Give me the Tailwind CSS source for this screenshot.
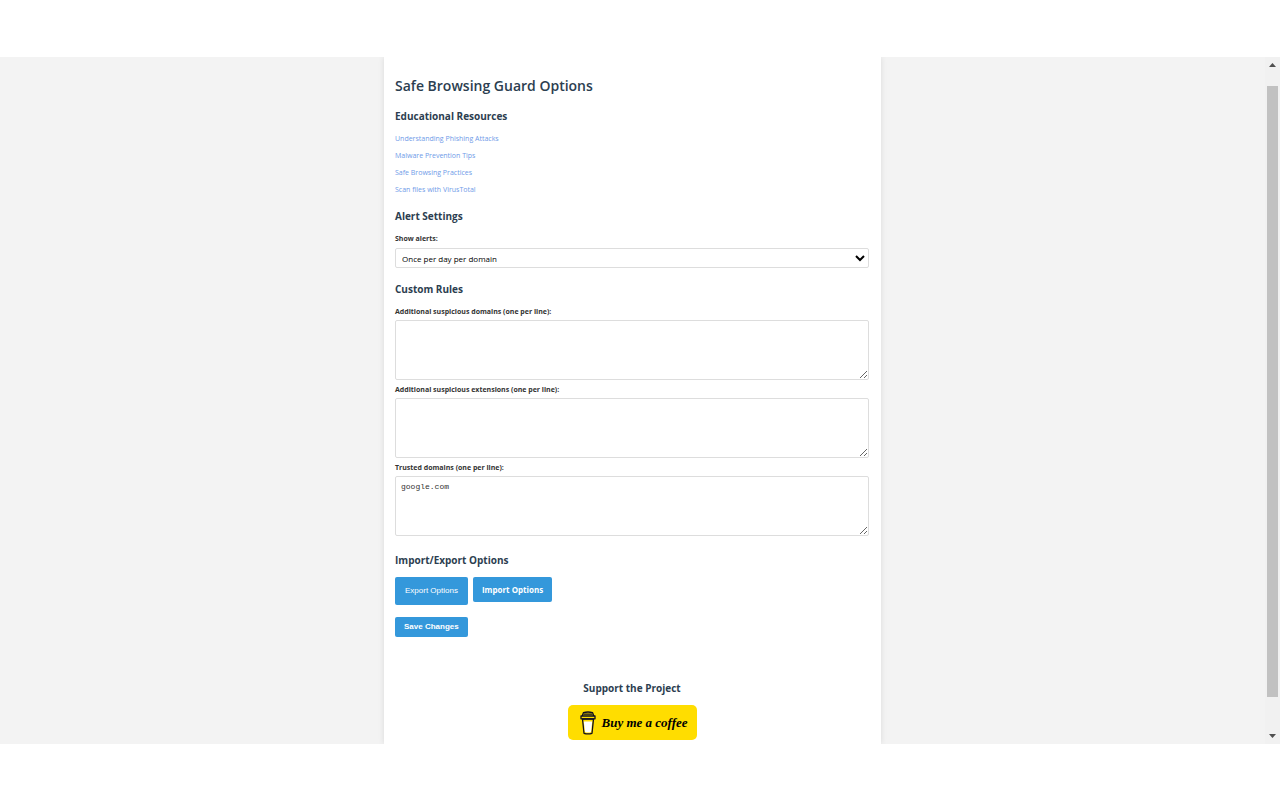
<!DOCTYPE html>
<html lang="en">
<head>
    <meta charset="UTF-8">
    <meta name="viewport" content="width=device-width, initial-scale=1.0">
    <title>Safe Browsing Guard Options</title>
    <script src="https://cdn.jsdelivr.net/npm/@tailwindcss/browser@4"></script>
</head>
<body class="bg-white h-screen pt-[57px] pb-14 flex flex-col overflow-hidden font-['Open_Sans','Noto_Sans',sans-serif] text-[#333]">
    <div class="flex flex-1 min-h-0 bg-[#f3f3f3]">
        <!-- Options page -->
        <div class="flex-1 overflow-hidden">
            <main class="max-w-[497px] min-h-full mx-auto pl-[11px] pr-3 pt-[19px] bg-white shadow-[0_0_6px_rgba(0,0,0,0.1)]">
                <h1 class="text-[14px] leading-5 font-semibold text-[#2c3e50]">Safe Browsing Guard Options</h1>

                <h2 class="mt-3 text-[10px] leading-4 font-bold text-[#2c3e50]">Educational Resources</h2>
                <ul class="mt-[6px] text-[7px] leading-[17px] text-[#6f9be8]">
                    <li><a href="#phishing">Understanding Phishing Attacks</a></li>
                    <li><a href="#malware">Malware Prevention Tips</a></li>
                    <li><a href="#practices">Safe Browsing Practices</a></li>
                    <li><a href="#virustotal">Scan files with VirusTotal</a></li>
                </ul>

                <h2 class="mt-[10px] text-[10px] leading-4 font-bold text-[#2c3e50]">Alert Settings</h2>
                <label for="alertFrequency" class="block mt-[9px] text-[7px] leading-3 font-bold">Show alerts:</label>
                <select id="alertFrequency" class="block w-full h-5 mt-[3px] px-[2px] border border-[#ddd] rounded-[2px] bg-white text-black text-[8px]">
                    <option>Once per day per domain</option>
                    <option>Every time</option>
                    <option>Never</option>
                </select>

                <h2 class="mt-[13px] text-[10px] leading-4 font-bold text-[#2c3e50]">Custom Rules</h2>
                <label for="customDomains" class="block mt-[9px] text-[7px] leading-3 font-bold">Additional suspicious domains (one per line):</label>
                <textarea id="customDomains" class="block w-full h-[60px] mt-[2px] px-[5px] py-1 border border-[#ddd] rounded-[2px] text-[8px] font-['Liberation_Mono',monospace]"></textarea>
                <label for="customExtensions" class="block mt-1 text-[7px] leading-3 font-bold">Additional suspicious extensions (one per line):</label>
                <textarea id="customExtensions" class="block w-full h-[60px] mt-[2px] px-[5px] py-1 border border-[#ddd] rounded-[2px] text-[8px] font-['Liberation_Mono',monospace]"></textarea>
                <label for="trustedDomains" class="block mt-1 text-[7px] leading-3 font-bold">Trusted domains (one per line):</label>
                <textarea id="trustedDomains" class="block w-full h-[60px] mt-[2px] px-[5px] py-1 border border-[#ddd] rounded-[2px] text-[8px] font-['Liberation_Mono',monospace]">google.com</textarea>

                <h2 class="mt-4 text-[10px] leading-4 font-bold text-[#2c3e50]">Import/Export Options</h2>
                <div class="mt-[9px] flex items-start gap-[5px]">
                    <button id="exportOptions" class="px-[10px] py-2 bg-[#3498db] text-white text-[8px] leading-3 rounded-[2px] font-['Liberation_Sans',sans-serif]">Export Options</button>
                    <button id="importOptions" class="px-[9px] py-[6px] bg-[#3498db] text-white text-[8px] leading-[13px] font-bold rounded-[2px]">Import Options</button>
                </div>
                <button id="saveOptions" class="block mt-3 px-[9px] py-1 bg-[#3498db] text-white text-[8px] leading-3 font-bold rounded-[2px] font-['Liberation_Sans',sans-serif]">Save Changes</button>

                <!-- Support -->
                <section class="mt-[43px] flex flex-col items-center">
                    <h2 class="text-[10px] leading-4 font-bold text-[#2c3e50]">Support the Project</h2>
                    <a href="#coffee" class="mt-[9px] w-[129px] h-[35px] flex items-center pl-3 gap-[6px] bg-[#ffdd00] rounded-[5px] text-black">
                        <svg class="w-4 h-6 shrink-0" viewBox="0 0 16 24" fill="none" stroke="#0d0c22" stroke-width="1.3" stroke-linejoin="round" stroke-linecap="round">
                            <path d="M2.5 8 4 22.3Q8 23.5 12 22.3L13.5 8Z" fill="#fd0"/>
                            <path d="M3.8 10.5h8.4L11 21Q8 22 5 21Z" fill="#fff" stroke="none"/>
                            <path d="M1 5h14v2.8H1ZM2.2 5 3.4 1.6Q8 .4 12.6 1.6L13.8 5"/>
                            <path d="M4 3.2h8"/>
                        </svg>
                        <span class="text-[13px] leading-4 font-semibold italic whitespace-nowrap font-[cursive]">Buy me a coffee</span>
                    </a>
                </section>
            </main>
        </div>

        <!-- Scrollbar -->
        <div class="w-[15px] flex flex-col items-center justify-between py-[6px] bg-[#f1f1f1]" aria-hidden="true">
            <svg class="w-[7px] h-1 shrink-0" viewBox="0 0 7 4"><path d="M0 4 3.5 0 7 4Z" fill="#505050"/></svg>
            <div class="w-[11px] flex-1 mt-[19px] mb-[37px] bg-[#c1c1c1]"></div>
            <svg class="w-[7px] h-1 shrink-0" viewBox="0 0 7 4"><path d="M0 0 3.5 4 7 0Z" fill="#505050"/></svg>
        </div>
    </div>
</body>
</html>
